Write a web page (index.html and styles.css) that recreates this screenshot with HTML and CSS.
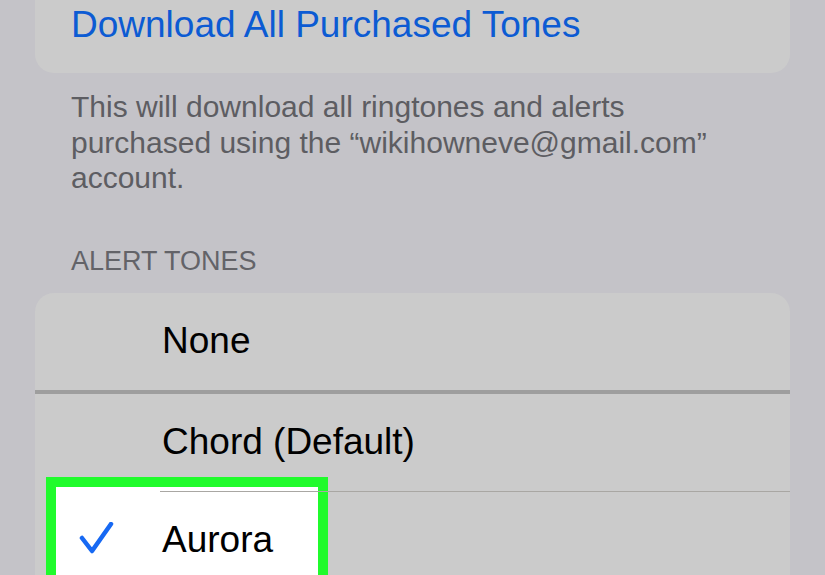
FILE: index.html
```html
<!DOCTYPE html>
<html lang="en">
<head>
    <meta charset="UTF-8">
    <meta name="viewport" content="width=device-width, initial-scale=1.0">
    <title>Alert Tones</title>
    <link rel="stylesheet" href="styles.css">
</head>
<body>
    <div class="settings">
        <div class="card top-card">
            <div class="row">
                <span class="link">Download All Purchased Tones</span>
            </div>
        </div>
        <p class="footer-note">This will download all ringtones and alerts purchased using the &ldquo;wikihowneve@gmail.com&rdquo; account.</p>

        <h3 class="section-title">ALERT TONES</h3>
        <div class="card list-card">
            <div class="highlight"></div>
            <div class="row">
                <span class="label">None</span>
            </div>
            <div class="sep-thick"></div>
            <div class="row">
                <span class="label">Chord (Default)</span>
            </div>
            <div class="sep-thin"></div>
            <div class="row">
                <svg class="check" width="40" height="40" viewBox="0 0 40 40">
                    <path d="M3 16 L13 29 L32 2" fill="none" stroke="#1769f3" stroke-width="4.5" stroke-linecap="round" stroke-linejoin="round"/>
                </svg>
                <span class="label">Aurora</span>
            </div>
        </div>
    </div>
</body>
</html>
```
FILE: styles.css
```css
body {
    margin: 0;
    background-color: #c4c3c8;
    font-family: "Liberation Sans", Arial, sans-serif;
    overflow: hidden;
    height: 575px;
}

.settings {
    padding: 0 35px;
}

.card {
    background: #cbcbcb;
    border-radius: 19px;
    position: relative;
    overflow: hidden;
}

.top-card {
    margin-top: -27px;
}

.row {
    height: 97px;
    display: flex;
    align-items: center;
    position: relative;
    z-index: 1;
}

.top-card .row {
    height: 96px;
    padding: 4px 0 0 36px;
}

.link {
    color: #0c5bd3;
    font-size: 37px;
}

.footer-note {
    margin: 16px 0 0;
    padding: 0 30px 0 36px;
    color: #5d5d62;
    font-size: 30px;
    line-height: 35.5px;
}

.section-title {
    margin: 49px 0 16px;
    padding-left: 36px;
    color: #636368;
    font-size: 27px;
    font-weight: normal;
    line-height: 32px;
}

.list-card {
    height: 282px;
    border-radius: 19px 19px 0 0;
}

.list-card .row {
    padding-left: 127px;
}

.label {
    color: #000;
    font-size: 37px;
}

.sep-thick {
    height: 4px;
    background: #9e9e9e;
    position: relative;
    z-index: 1;
}

.sep-thin {
    height: 1px;
    margin-left: 125px;
    background: #a9a7a3;
    position: relative;
    z-index: 1;
}

.check {
    position: absolute;
    left: 44px;
    top: 30px;
}

/* green marker box round the selected tone */
.highlight {
    position: absolute;
    left: 11px;
    top: 184px;
    width: 262px;
    height: 130px;
    border: 10px solid #20fb2c;
    background: #fff;
    z-index: 0;
}
```
